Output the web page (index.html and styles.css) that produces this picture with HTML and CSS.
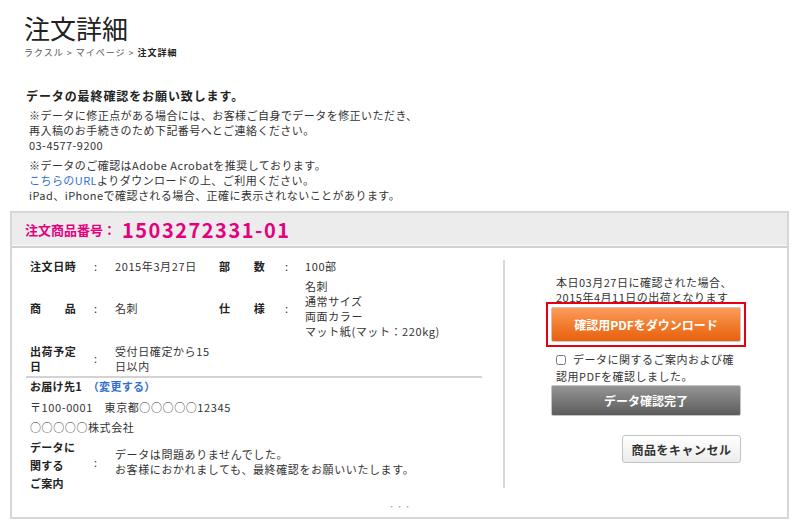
FILE: index.html
```html
<!DOCTYPE html>
<html lang="ja">
<head>
    <meta charset="UTF-8">
    <title>注文詳細</title>
    <link rel="stylesheet" href="styles.css">
</head>
<body>

    <div class="page-head">
        <h1 class="page-title">注文詳細</h1>
        <p class="breadcrumb">ラクスル &gt; マイページ &gt; <strong>注文詳細</strong></p>
    </div>

    <div class="notice">
        <h2 class="notice-title">データの最終確認をお願い致します。</h2>
        <p class="notice-text">※データに修正点がある場合には、お客様ご自身でデータを修正いただき、<br>再入稿のお手続きのため下記番号へとご連絡ください。<br>03-4577-9200</p>
        <p class="notice-text">※データのご確認はAdobe Acrobatを推奨しております。<br><a href="#" class="link">こちらのURL</a>よりダウンロードの上、ご利用ください。<br>iPad、iPhoneで確認される場合、正確に表示されないことがあります。</p>
    </div>

    <div class="order-box">
        <div class="order-head">
            <span class="order-label">注文商品番号：</span>
            <span class="order-number">1503272331-01</span>
        </div>

        <div class="order-body">
            <div class="order-info">
                <table class="info-table">
                    <tr>
                        <th>注文日時</th>
                        <td class="colon">:</td>
                        <td class="date">2015年3月27日</td>
                        <th class="sub">部数</th>
                        <td class="colon colon-sub">:</td>
                        <td>100部</td>
                    </tr>
                    <tr>
                        <th>商品</th>
                        <td class="colon">:</td>
                        <td>名刺</td>
                        <th class="sub">仕様</th>
                        <td class="colon colon-sub">:</td>
                        <td>名刺<br>通常サイズ<br>両面カラー<br>マット紙(マット：220kg)</td>
                    </tr>
                    <tr>
                        <th>出荷予定日</th>
                        <td class="colon">:</td>
                        <td colspan="4">受付日確定から15<br>日以内</td>
                    </tr>
                </table>

                <div class="delivery">
                    <p class="delivery-title">お届け先1 <a href="#" class="link change-link">（変更する）</a></p>
                    <p class="address">〒100-0001　東京都○○○○○12345</p>
                    <p class="address">○○○○○株式会社</p>
                    <table class="info-table guide-table">
                        <tr>
                            <th>データに<br>関する<br>ご案内</th>
                            <td class="colon">:</td>
                            <td class="guide-text">データは問題ありませんでした。<br>お客様におかれましても、最終確認をお願いいたします。</td>
                        </tr>
                    </table>
                </div>
            </div>

            <div class="order-actions">
                <div class="actions-inner">
                    <p class="ship-note">本日03月27日に確認された場合、<br>2015年4月11日の出荷となります</p>
                    <div class="pdf-frame">
                        <button class="pdf-button">確認用PDFをダウンロード</button>
                    </div>
                    <p class="confirm-check"><input type="checkbox" class="check">データに関するご案内および確<br>認用PDFを確認しました。</p>
                    <button class="done-button">データ確認完了</button>
                    <button class="cancel-button">商品をキャンセル</button>
                </div>
            </div>
        </div>

        <div class="order-more">・・・</div>
    </div>

</body>
</html>
```

FILE: styles.css
```css
body {
    margin: 0;
    font-family: "Noto Sans CJK JP", sans-serif;
    color: #333;
    background-color: #fff;
}
p {
    margin: 0;
}
.link {
    color: #2f6fd0;
    text-decoration: none;
}

/* page title */
.page-head {
    padding: 12px 24px 0;
}
.page-title {
    margin: 0;
    font-size: 26px;
    font-weight: normal;
    line-height: 32px;
    color: #222;
}
.breadcrumb {
    margin-top: 2px;
    font-size: 9px;
    line-height: 14px;
    letter-spacing: 1px;
    color: #555;
}
.breadcrumb strong {
    color: #222;
}

/* notice */
.notice {
    padding-left: 26px;
}
.notice-title {
    margin: 27px 0 3px;
    font-size: 12px;
    line-height: 18px;
    letter-spacing: 0.9px;
    color: #222;
}
.notice-text {
    margin: 0 0 5px 3px;
    font-size: 11px;
    line-height: 15px;
    letter-spacing: 0.45px;
}

/* order box */
.order-box {
    margin: 8px 11px 0 10px;
    border: 2px solid #d7d7d7;
}
.order-head {
    display: flex;
    align-items: center;
    height: 33px;
    padding-left: 13px;
    background-color: #ececec;
    border-bottom: 2px solid #d0d0d0;
    box-shadow: inset 0 -1px 0 #f8f8f8;
    color: #e4007f;
    font-weight: bold;
}
.order-label {
    font-size: 13px;
}
.order-number {
    margin-left: 6px;
    font-size: 20px;
    letter-spacing: 1.5px;
}
.order-body {
    display: flex;
    align-items: flex-start;
}
.order-info {
    width: 456px;
    margin-left: 14px;
    padding-top: 8px;
    font-size: 11px;
    letter-spacing: 0.6px;
}

/* info table */
.info-table {
    border-collapse: collapse;
    margin-left: 4px;
}
.info-table th,
.info-table td {
    padding: 2.5px 0;
    line-height: 15px;
    vertical-align: middle;
    text-align: left;
}
.info-table th {
    width: 46px;
    padding-right: 18px;
    text-align: justify;
    text-align-last: justify;
    letter-spacing: 0.3px;
    color: #222;
}
.info-table th.sub {
    padding-right: 20px;
}
.colon {
    width: 21px;
}
.colon-sub {
    width: 20px;
}
.date {
    width: 104px;
}
.info-table + .delivery {
    border-top: 2px solid #d3d3d3;
}

/* delivery */
.delivery-title {
    padding-left: 4px;
    font-weight: bold;
    line-height: 16px;
    letter-spacing: 0.3px;
    color: #222;
}
.change-link {
    margin-left: 3px;
}
.address {
    padding-left: 4px;
    line-height: 20px;
}
.delivery-title + .address {
    margin-top: 3px;
}
.guide-table {
    margin-top: 1px;
}
.guide-table td {
    padding: 0;
    vertical-align: top;
}
.guide-table th {
    padding: 0 18px 0 0;
    vertical-align: top;
    line-height: 18px;
    text-align: left;
    text-align-last: auto;
}
.guide-table .colon {
    padding-top: 17px;
}
.guide-table .guide-text {
    padding-top: 9px;
    line-height: 15px;
}

/* right column */
.order-actions {
    flex: 1;
    margin: 12px 0 0 21px;
    padding: 15px 0 25px;
    border-left: 2px solid #d7d7d7;
}
.actions-inner {
    width: 190px;
    margin: 0 auto;
    font-size: 11px;
    letter-spacing: 0.5px;
}
.ship-note {
    padding-left: 5px;
    line-height: 15px;
    white-space: nowrap;
}
.pdf-frame {
    position: relative;
    margin: -3px -5px 0;
    padding: 3px;
    border: 2px solid #e60012;
    background-color: #fff;
}
.pdf-button,
.done-button,
.cancel-button {
    display: block;
    padding: 0;
    font-family: inherit;
    font-weight: bold;
    font-size: 12px;
    letter-spacing: 0;
    cursor: pointer;
}
.pdf-button {
    width: 100%;
    height: 35px;
    border: 1px solid #c9c9c9;
    border-radius: 2px;
    background: linear-gradient(#fb9d5e, #f27d2e 50%, #e8600e);
    color: #fff;
}
.confirm-check {
    margin-top: 4px;
    padding-left: 5px;
    line-height: 17px;
    white-space: nowrap;
}
.check {
    width: 10px;
    height: 10px;
    margin: 0 7px 0 0;
    vertical-align: -1px;
}
.done-button {
    width: 190px;
    height: 31px;
    border: 1px solid #c4c4c4;
    border-radius: 2px;
    background: linear-gradient(#959595, #5c5c5c);
    color: #fff;
}
.cancel-button {
    width: 119px;
    height: 28px;
    margin: 19px 0 0 auto;
    border: 1px solid #c3c3c3;
    border-radius: 3px;
    background: linear-gradient(#fff, #ececec);
    color: #333;
    letter-spacing: 0.5px;
}
.order-more {
    margin-top: 8px;
    padding-bottom: 3px;
    text-align: center;
    font-size: 8px;
    line-height: 14px;
    color: #aaa;
}
```
